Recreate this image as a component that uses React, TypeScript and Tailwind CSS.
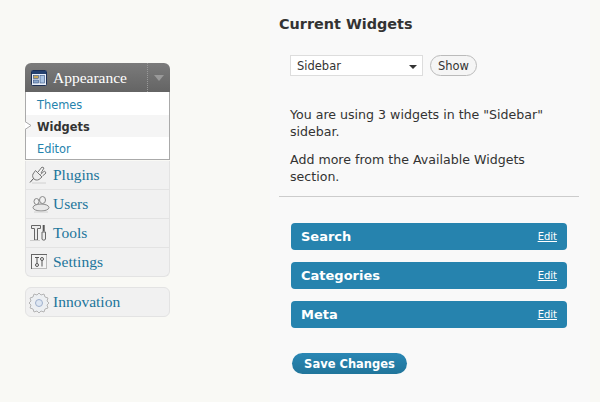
const sans = "font-['DejaVu_Sans',Verdana,sans-serif]";

const PluginIcon = () => (
  <svg width="24" height="22" viewBox="0 0 24 22" fill="none" stroke="#777" strokeWidth="1">
    <path d="M7.500 6.500l6.500 6.500-3 2.500c-2 1-4 .5-5-.5s-2-3-1-5z" fill="#ececec" />
    <path d="M10 8l4-5 2 1-3 5M12.500 10.500l4-3.500 1.500 2-3.500 3" fill="#f4f4f4" />
    <path d="M5.500 14.500L2 18.500" stroke="#555" />
    <path d="M4 19h14" stroke="#d0d0d0" />
  </svg>
);

const UsersIcon = () => (
  <svg width="24" height="22" viewBox="0 0 24 22" fill="#f0f0f0" stroke="#888" strokeWidth="1">
    <ellipse cx="14.500" cy="7" rx="3" ry="3.500" />
    <ellipse cx="8.500" cy="8.500" rx="2.500" ry="3" />
    <ellipse cx="13" cy="14.500" rx="8" ry="3.500" fill="#e8e8e8" />
    <path d="M6 19h14" stroke="#d0d0d0" />
  </svg>
);

const ToolsIcon = () => (
  <svg width="24" height="22" viewBox="0 0 24 22" fill="#ececec" stroke="#666" strokeWidth="1">
    <path d="M3.500 3.500h9v3h-3v11.500h-3V6.500h-3z" />
    <path d="M15.700 3v6.500" strokeWidth="2" stroke="#555" />
    <path d="M14 10h3.500v7c0 1.500-3.500 1.500-3.500 0z" />
    <path d="M2 18.500h10" stroke="#ccc" />
  </svg>
);

const SettingsIcon = () => (
  <svg width="24" height="22" viewBox="0 0 24 22" fill="none" stroke="#666" strokeWidth="1">
    <rect x="3.500" y="3.500" width="15" height="14" stroke="#666" fill="#f4f4f4" />
    <path d="M4 17.500h15M18.500 4v14" stroke="#bbb" />
    <path d="M7 6.500h4M9 6.500v6" stroke="#555" />
    <circle cx="9" cy="14" r="1.500" stroke="#555" />
    <circle cx="14" cy="8" r="1.500" stroke="#555" />
    <path d="M14 9.500v6" stroke="#555" />
  </svg>
);

const GearIcon = () => (
  <svg width="24" height="22" viewBox="0 0 24 22" fill="#eceff2" stroke="#b5b5b5">
    <path d="M11 2l2 2 3-1 1 3 3 1-1 3 2 2-2 2 1 3-3 1-1 3-3-1-2 2-2-2-3 1-1-3-3-1 1-3-2-2 2-2-1-3 3-1 1-3 3 1z" />
    <circle cx="11" cy="12" r="3.500" stroke="#9fb0cc" fill="#dde6f2" />
  </svg>
);

const AppearanceIcon = () => (
  <svg width="16" height="16" viewBox="0 0 16 16">
    <rect x="0.500" y="0.500" width="15" height="15" rx="1" fill="#e8eef8" stroke="#1c2f55" />
    <rect x="1" y="1" width="14" height="3" fill="#24406f" />
    <rect x="2.500" y="5.500" width="5" height="3" fill="#c9a85a" stroke="#35507f" strokeWidth="0.600" />
    <rect x="2.500" y="10" width="5" height="3" fill="#8aa6cc" stroke="#35507f" strokeWidth="0.600" />
    <rect x="9" y="5.500" width="4.500" height="7.500" fill="#a9c2e2" stroke="#35507f" strokeWidth="0.600" />
  </svg>
);

const menuItems = [
  { label: "Plugins", icon: <PluginIcon /> },
  { label: "Users", icon: <UsersIcon /> },
  { label: "Tools", icon: <ToolsIcon /> },
  { label: "Settings", icon: <SettingsIcon /> },
];

const widgets = ["Search", "Categories", "Meta"];

function Sidebar() {
  return (
    <div className="w-[270px] shrink-0 pl-[25px] pt-[63px]">
      <div className="w-[145px] font-['Liberation_Serif',Georgia,serif]">
        <div className="h-[29px] rounded-t-[6px] bg-gradient-to-b from-[#7b7b7b] to-[#646464] flex items-center pl-[6px] text-white">
          <AppearanceIcon />
          <span className="ml-[6px] text-[15.5px] flex-1">Appearance</span>
          <span className="w-[23px] h-full border-l border-dotted border-[#999] flex items-center justify-center">
            <span className="border-x-[5px] border-t-[6px] border-x-transparent border-t-[#999]" />
          </span>
        </div>
        <div className={`relative h-[68px] bg-white border border-t-0 border-[#aaa] pt-px text-[11.4px] ${sans}`}>
          <div className="h-[22px] pt-[2px] leading-[20px] pl-[11px] text-[#2583ad]">Themes</div>
          <div className="h-[22px] pt-[2px] leading-[20px] pl-[11px] font-bold text-[#333] bg-[#f5f5f5]">Widgets</div>
          <div className="h-[22px] pt-[2px] leading-[20px] pl-[11px] text-[#2583ad]">Editor</div>
          <svg className="absolute left-[-1px] top-[29px]" width="8" height="9" viewBox="0 0 8 9">
            <path d="M0 0.500L6 4.500L0 8.500" fill="#fff" stroke="#aaa" />
          </svg>
        </div>
        <div className="mt-px bg-[#f1f1f1] border border-t-0 border-[#e3e3e3] rounded-b-[6px]">
          {menuItems.map((item) => (
            <div key={item.label} className="h-[29px] flex items-center pl-[2px] border-b border-[#e3e3e3] last:h-[28px] last:border-b-0 text-[#21759b] text-[15.5px]">
              {item.icon}
              <span className="ml-px">{item.label}</span>
            </div>
          ))}
        </div>
        <div className="mt-[10px] h-[30px] pb-px bg-[#f1f1f1] border border-[#e3e3e3] rounded-[6px] flex items-center pl-[2px] text-[#21759b] text-[15.5px]">
          <GearIcon />
          <span className="ml-px">Innovation</span>
        </div>
      </div>
    </div>
  );
}

function WidgetPanel() {
  return (
    <div className={`w-[320px] h-full bg-[#f9f9f9] pl-[9px] pr-[11px] pt-[15px] text-[#333] ${sans}`}>
      <h3 className="text-[14.4px] leading-[18px] font-bold">Current Widgets</h3>
      <div className="mt-[22px] ml-[11px] flex items-center gap-[7px]">
        <div className="w-[133px] h-[21px] bg-white border border-[#ddd] flex items-center justify-between pl-[6px] pr-[5px] pt-[2px] text-[11.5px]">
          <span>Sidebar</span>
          <span className="border-x-[4px] border-t-[4px] border-x-transparent border-t-[#333]" />
        </div>
        <button className="w-[47px] h-[21px] pt-[2px] rounded-full border border-[#bbb] bg-[#f5f5f5] text-[11.5px]">Show</button>
      </div>
      <div className="ml-[11px] mt-[30px] text-[12.6px] leading-[17px] w-[285px]">
        <p>You are using 3 widgets in the "Sidebar" sidebar.</p>
        <p className="mt-[11px]">Add more from the Available Widgets section.</p>
      </div>
      <hr className="mt-[11px] border-t border-[#ccc]" />
      <div className="ml-[12px] mt-[26px] w-[276px] flex flex-col gap-[12px]">
        {widgets.map((name) => (
          <div key={name} className="h-[27px] rounded-[4px] bg-[#2683ae] text-white flex items-center justify-between px-[10px]">
            <span className="text-[13px] font-bold">{name}</span>
            <a className="text-[10px] underline">Edit</a>
          </div>
        ))}
      </div>
      <button className="ml-[13px] mt-[25px] w-[115px] h-[21px] pt-[2px] rounded-full bg-gradient-to-b from-[#2a87b4] to-[#21759b] text-white text-[11.5px] font-bold">
        Save Changes
      </button>
    </div>
  );
}

export default function App() {
  return (
    <div className="w-[600px] h-[402px] overflow-hidden bg-[#f9f9f5] flex">
      <Sidebar />
      <WidgetPanel />
    </div>
  );
}
